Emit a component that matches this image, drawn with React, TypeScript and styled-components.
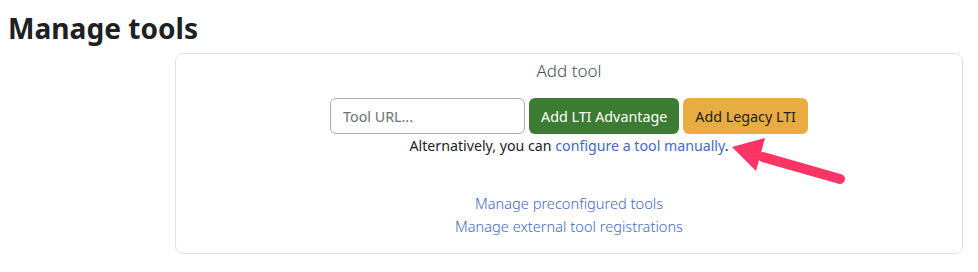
import React from "react";
import styled, { createGlobalStyle } from "styled-components";

const Global = createGlobalStyle`
  html, body { margin: 0; padding: 0; background: #fff; }
  body { font-family: "Noto Sans", "Open Sans", sans-serif; color: #1d2125; }
`;

const Page = styled.div`
  padding: 0 8px;
  position: relative;
  width: 978px;
  height: 272px;
  box-sizing: border-box;
  overflow: hidden;
`;

const Title = styled.h2`
  margin: 0;
  padding-top: 11px;
  font-size: 28.1px;
  line-height: 34px;
  font-weight: 700;
  color: #1d2125;
`;

const Card = styled.div`
  margin: 8px 0 0 167px;
  width: 788px;
  height: 201px;
  box-sizing: border-box;
  border: 1px solid #dee2e6;
  border-radius: 8px;
  display: flex;
  flex-direction: column;
  align-items: center;
  padding-top: 6px;
`;

const CardTitle = styled.div`
  font-size: 17px;
  line-height: 22px;
  font-weight: 300;
  color: #495057;
`;

const Row = styled.div`
  display: flex;
  gap: 4px;
  margin-top: 16px;
`;

const Input = styled.input`
  width: 195px;
  height: 36px;
  box-sizing: border-box;
  border: 1px solid #a9aeb4;
  border-radius: 6px;
  padding: 0 12px;
  font-family: inherit;
  font-size: 14.3px;
  color: #1d2125;
  &::placeholder { color: #6a737b; }
`;

const Button = styled.button<{ $variant: "green" | "orange" }>`
  height: 36px;
  border: none;
  border-radius: 6px;
  padding: 0 12px;
  font-family: inherit;
  font-size: 14.3px;
  background: ${(p) => (p.$variant === "green" ? "#3b7b32" : "#e9ac43")};
  color: ${(p) => (p.$variant === "green" ? "#fff" : "#1d2125")};
`;

const Alt = styled.div`
  font-size: 14.2px;
  line-height: 20px;
  margin-top: 2px;
  color: #1d2125;
`;

const Link = styled.a`
  color: #3f6ac6;
  text-decoration: none;
`;

const Links = styled.div`
  margin-top: 37px;
  display: flex;
  flex-direction: column;
  align-items: center;
  gap: 3px;
  font-size: 14.6px;
  line-height: 20px;
  font-weight: 300;
`;

const Arrow = styled.svg`
  position: absolute;
  left: 723px;
  top: 135px;
`;

export default function App() {
  return (
    <Page>
      <Global />
      <Title>Manage tools</Title>
      <Card>
        <CardTitle>Add tool</CardTitle>
        <Row>
          <Input placeholder="Tool URL..." />
          <Button $variant="green">Add LTI Advantage</Button>
          <Button $variant="orange">Add Legacy LTI</Button>
        </Row>
        <Alt>
          Alternatively, you can <Link href="#">configure a tool manually</Link>.
        </Alt>
        <Links>
          <Link href="#">Manage preconfigured tools</Link>
          <Link href="#">Manage external tool registrations</Link>
        </Links>
      </Card>
      <Arrow width="130" height="60" viewBox="0 0 130 60">
        <line x1="117" y1="44" x2="40" y2="22" stroke="#fe3465" strokeWidth="10" strokeLinecap="round" />
        <polygon points="9,12 42,3 33,36" fill="#fe3465" />
      </Arrow>
    </Page>
  );
}
